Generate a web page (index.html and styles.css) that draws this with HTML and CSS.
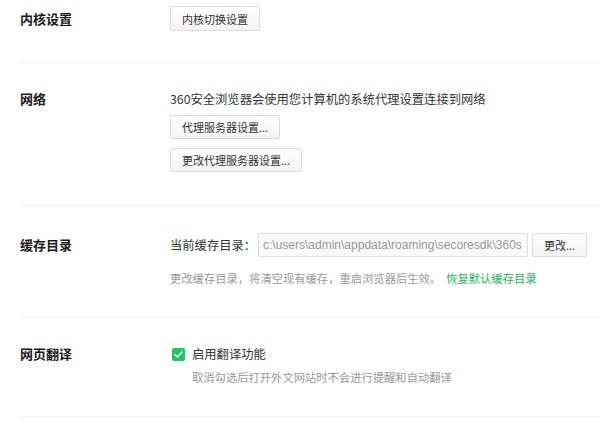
FILE: index.html
```html
<!DOCTYPE html>
<html lang="zh-CN">
<head>
<meta charset="utf-8">
<title>设置</title>
<link rel="stylesheet" href="styles.css">
</head>
<body>
<div class="settings">
  <section class="row row-kernel">
    <div class="label">内核设置</div>
    <div class="content">
      <button class="btn">内核切换设置</button>
    </div>
  </section>

  <section class="row row-network">
    <div class="label">网络</div>
    <div class="content">
      <p class="text">360安全浏览器会使用您计算机的系统代理设置连接到网络</p>
      <button class="btn btn-block first">代理服务器设置...</button>
      <button class="btn btn-block second">更改代理服务器设置...</button>
    </div>
  </section>

  <section class="row row-cache">
    <div class="label">缓存目录</div>
    <div class="content">
      <div class="cache-line">
        <span class="text">当前缓存目录：</span>
        <div class="path">c:\users\admin\appdata\roaming\secoresdk\360s</div>
        <button class="btn btn-change">更改...</button>
      </div>
      <p class="hint">更改缓存目录，将清空现有缓存，重启浏览器后生效。<a class="link" href="#">恢复默认缓存目录</a></p>
    </div>
  </section>

  <section class="row row-translate">
    <div class="label">网页翻译</div>
    <div class="content">
      <label class="check-line">
        <span class="checkbox">
          <svg viewBox="0 0 13 13" width="13" height="13"><path d="M3 6.6 L5.5 9 L10 4" fill="none" stroke="#fff" stroke-width="1.6" stroke-linecap="round" stroke-linejoin="round"/></svg>
        </span>
        <span class="text">启用翻译功能</span>
      </label>
      <p class="hint indent">取消勾选后打开外文网站时不会进行提醒和自动翻译</p>
    </div>
  </section>
</div>
</body>
</html>
```

FILE: styles.css
```css
html, body {
  margin: 0;
  padding: 0;
  background: #fff;
}

body {
  font-family: "Noto Sans CJK SC", "Microsoft YaHei", sans-serif;
  color: #333;
  width: 600px;
  height: 439px;
  overflow: hidden;
}

.settings {
  padding-left: 20px;
}

.row {
  display: grid;
  grid-template-columns: 150px 1fr;
  border-bottom: 1px solid #f2f2f2;
}

.label {
  font-size: 13px;
  font-weight: bold;
  color: #1a1a1a;
  line-height: 20px;
}

.content {
  display: flex;
  flex-direction: column;
  align-items: flex-start;
}

.text {
  margin: 0;
  font-size: 12.3px;
  line-height: 20px;
  color: #333;
}

.btn {
  font-family: inherit;
  font-size: 11px;
  color: #333;
  height: 24px;
  padding: 0 11px;
  border: 1px solid #dcdcdc;
  border-radius: 2px;
  background: linear-gradient(#ffffff, #f4f4f4);
  line-height: 22px;
  cursor: pointer;
}

/* Row 1 */
.row-kernel {
  padding: 6px 0 31px;
}
.row-kernel .label {
  line-height: 25px;
}
.row-kernel .btn {
  height: 25px;
}

/* Row 2 */
.row-network {
  padding: 26px 0 33px;
}
.btn-block.first {
  margin-top: 6px;
}
.btn-block.second {
  margin-top: 9px;
}

/* Row 3 */
.row-cache {
  padding: 27px 0 28px;
}
.row-cache .label {
  line-height: 24px;
}
.cache-line {
  display: flex;
  align-items: center;
  height: 24px;
}
.cache-line .text {
  width: 88px;
  white-space: nowrap;
}
.path {
  box-sizing: border-box;
  width: 270px;
  height: 24px;
  border: 1px solid #dedede;
  border-radius: 2px;
  background: #fafafa;
  color: #999;
  font-family: "Liberation Sans", Arial, sans-serif;
  font-size: 12px;
  line-height: 22px;
  padding: 0 3px 0 4px;
  white-space: nowrap;
  overflow: hidden;
}
.btn-change {
  margin-left: 4px;
  width: 55px;
  padding: 0;
}

.hint {
  margin: 11px 0 0;
  font-size: 11.3px;
  line-height: 20px;
  color: #999;
  white-space: nowrap;
}
.link {
  color: #1db45a;
  text-decoration: none;
  margin-left: 5px;
}

/* Row 4 */
.row-translate {
  padding: 27px 0 29px;
}
.check-line {
  display: flex;
  align-items: center;
  height: 20px;
}
.checkbox {
  display: block;
  width: 13px;
  height: 13px;
  margin-left: 2px;
  margin-right: 7px;
  border-radius: 2px;
  background: #22c463;
}
.checkbox svg {
  display: block;
}
.hint.indent {
  margin: 3px 0 0 22px;
}
```
